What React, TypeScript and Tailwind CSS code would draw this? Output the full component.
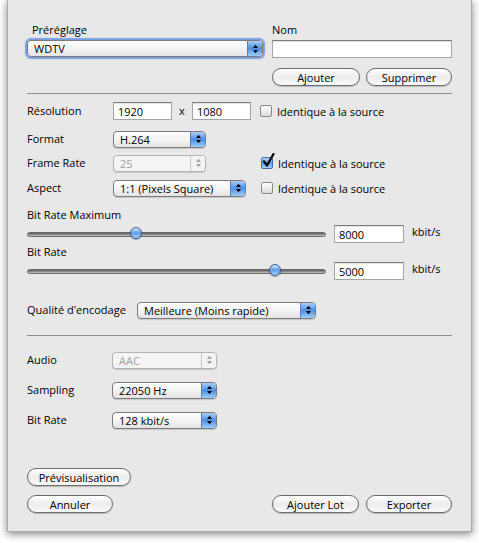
import React from "react";

const font = { fontFamily: '"Open Sans", "Liberation Sans", Arial, sans-serif' };

function Arrows({ disabled }: { disabled?: boolean }) {
  const c = disabled ? "#a0a0a0" : "#000";
  return (
    <svg width="7" height="10" viewBox="0 0 7 10">
      <path d="M3.5 0.8 L6 4 L1 4 Z" fill={c} />
      <path d="M3.5 9.2 L6 6 L1 6 Z" fill={c} />
    </svg>
  );
}

function Popup({ label, w, disabled, focus }: { label: string; w: string; disabled?: boolean; focus?: boolean }) {
  return (
    <div
      className={`${w} h-[17px] flex items-stretch rounded-[4px] border ${
        disabled ? "border-[#b4b4b4] bg-[#f4f4f4] text-[#a2a2a2]" : "border-[#7c7c7c] bg-gradient-to-b from-[#ffffff] via-[#f3f3f3] to-[#e4e4e4] text-black"
      } ${focus ? "shadow-[0_0_1px_2px_rgba(96,146,225,0.85)]" : "shadow-[0_1px_1px_rgba(0,0,0,0.15)]"} overflow-hidden`}
    >
      <div className="flex-1 pl-[6px] flex items-center text-[11px] leading-none whitespace-nowrap">{label}</div>
      <div
        className={`w-[15px] flex items-center justify-center border-l ${
          disabled ? "border-[#c8c8c8] bg-[#f4f4f4]" : "border-[#5a7fb8] bg-gradient-to-b from-[#a9cdf6] via-[#4d8fe3] to-[#9cd0fb]"
        }`}
      >
        <Arrows disabled={disabled} />
      </div>
    </div>
  );
}

function Field({ value, w }: { value: string; w: string }) {
  return (
    <div className={`${w} h-[18px] bg-white border border-[#a5a5a5] border-t-[#7d7d7d] shadow-[inset_0_1px_1px_rgba(0,0,0,0.12)] flex items-center pl-[4px] text-[11px] leading-none`}>
      {value}
    </div>
  );
}

function Btn({ label, w }: { label: string; w: string }) {
  return (
    <div className={`${w} h-[18px] rounded-full border border-[#6c6c6c] bg-gradient-to-b from-[#ffffff] via-[#ececec] to-[#fafafa] shadow-[0_1px_1px_rgba(0,0,0,0.2)] flex items-center justify-center text-[11px] leading-none text-black`}>
      {label}
    </div>
  );
}

function Check({ checked, label }: { checked?: boolean; label: string }) {
  return (
    <div className="flex items-center gap-[5px]">
      <div className="relative w-[12px] h-[12px]">
        <div
          className={`w-[12px] h-[12px] rounded-[2px] border ${
            checked ? "border-[#4a6fa8] bg-gradient-to-b from-[#b3d3f6] via-[#5b9ae6] to-[#a9d4fb]" : "border-[#8a8a8a] bg-gradient-to-b from-[#ffffff] to-[#dcdcdc]"
          }`}
        />
        {checked && (
          <svg className="absolute left-[1px] top-[-4px]" width="13" height="15" viewBox="0 0 13 15">
            <path d="M2 8.5 L5 12.5 L11.5 1" stroke="#000" strokeWidth="2.2" fill="none" strokeLinecap="round" strokeLinejoin="round" />
          </svg>
        )}
      </div>
      <span className="text-[11px] leading-none">{label}</span>
    </div>
  );
}

function Slider({ pct }: { pct: number }) {
  return (
    <div className="relative w-[299px] h-[18px] flex items-center">
      <div className="w-full h-[5px] rounded-full bg-gradient-to-b from-[#5c5c5c] via-[#8a8a8a] to-[#c8c8c8] border border-[#6a6a6a]" />
      <div
        className="absolute top-[2px] w-[12px] h-[12px] rounded-full border border-[#3a5f96] bg-gradient-to-b from-[#d6e9fc] via-[#5f9ce6] to-[#a6d3fb] shadow-[0_1px_1px_rgba(0,0,0,0.3)]"
        style={{ left: `calc(${pct}% - 6px)` }}
      />
    </div>
  );
}

export default function App() {
  return (
    <div className="w-[479px] h-[543px] bg-white" style={font}>
      <div className="ml-[7px] w-[465px] h-[532px] bg-[#e8e8e8] border-x border-b border-[#a9a9a9] shadow-[0_2px_8px_rgba(0,0,0,0.5)] px-[19px] pt-[23px] text-[11px] text-black flex flex-col">
        {/* top */}
        <div className="flex gap-[9px]">
          <div className="flex flex-col w-[236px]">
            <div className="pl-[5px] h-[13px] leading-[13px]">Préréglage</div>
            <div className="mt-[4px]">
              <Popup label="WDTV" w="w-[236px]" focus />
            </div>
          </div>
          <div className="flex flex-col w-[180px]">
            <div className="h-[13px] leading-[13px]">Nom</div>
            <div className="mt-[4px]">
              <Field value="" w="w-[180px]" />
            </div>
            <div className="mt-[10px] flex gap-[6px]">
              <Btn label="Ajouter" w="w-[88px]" />
              <Btn label="Supprimer" w="w-[86px]" />
            </div>
          </div>
        </div>
        <div className="mt-[7px] border-t border-[#8e8e8e]" />

        {/* video */}
        <div className="mt-[8px] h-[18px] flex items-center">
          <div className="w-[86px]">Résolution</div>
          <Field value="1920" w="w-[59px]" />
          <div className="w-[20px] text-center">x</div>
          <Field value="1080" w="w-[59px]" />
          <div className="ml-[9px]">
            <Check label="Identique à la source" />
          </div>
        </div>
        <div className="mt-[10px] h-[18px] flex items-center">
          <div className="w-[86px]">Format</div>
          <Popup label="H.264" w="w-[93px]" />
        </div>
        <div className="mt-[6px] h-[18px] flex items-center">
          <div className="w-[86px]">Frame Rate</div>
          <Popup label="25" w="w-[93px]" disabled />
          <div className="ml-[55px]">
            <Check checked label="Identique à la source" />
          </div>
        </div>
        <div className="mt-[7px] h-[18px] flex items-center">
          <div className="w-[86px]">Aspect</div>
          <Popup label="1:1 (Pixels Square)" w="w-[133px]" />
          <div className="ml-[15px]">
            <Check label="Identique à la source" />
          </div>
        </div>

        {/* bit rates */}
        <div className="mt-[11px] h-[13px] leading-[13px]">Bit Rate Maximum</div>
        <div className="mt-[4px] h-[18px] flex items-center">
          <Slider pct={36.5} />
          <div className="ml-[8px]">
            <Field value="8000" w="w-[70px]" />
          </div>
          <div className="ml-[8px] -mt-[3px]">kbit/s</div>
        </div>
        <div className="mt-[2px] h-[13px] leading-[13px]">Bit Rate</div>
        <div className="mt-[4px] h-[18px] flex items-center">
          <Slider pct={83} />
          <div className="ml-[8px]">
            <Field value="5000" w="w-[70px]" />
          </div>
          <div className="ml-[8px] -mt-[3px]">kbit/s</div>
        </div>
        <div className="mt-[21px] h-[18px] flex items-center">
          <div className="w-[110px]">Qualité d'encodage</div>
          <Popup label="Meilleure (Moins rapide)" w="w-[179px]" />
        </div>
        <div className="mt-[16px] border-t border-[#8e8e8e]" />

        {/* audio */}
        <div className="mt-[15px] h-[18px] flex items-center">
          <div className="w-[85px]">Audio</div>
          <Popup label="AAC" w="w-[105px]" disabled />
        </div>
        <div className="mt-[12px] h-[18px] flex items-center">
          <div className="w-[85px]">Sampling</div>
          <Popup label="22050 Hz" w="w-[105px]" />
        </div>
        <div className="mt-[12px] h-[18px] flex items-center">
          <div className="w-[85px]">Bit Rate</div>
          <Popup label="128 kbit/s" w="w-[105px]" />
        </div>

        {/* buttons */}
        <div className="mt-[39px] flex">
          <Btn label="Prévisualisation" w="w-[104px]" />
        </div>
        <div className="mt-[9px] flex items-center">
          <Btn label="Annuler" w="w-[86px]" />
          <div className="flex-1" />
          <Btn label="Ajouter Lot" w="w-[87px]" />
          <div className="ml-[7px]">
            <Btn label="Exporter" w="w-[86px]" />
          </div>
        </div>
      </div>
    </div>
  );
}
